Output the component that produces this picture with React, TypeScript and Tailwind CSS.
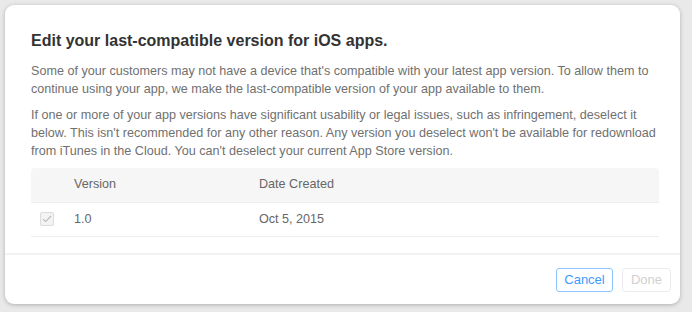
export default function App() {
  return (
    <div className="h-[312px] w-[692px] overflow-hidden bg-[#e9e9e9] pl-[5px] pt-[5px] font-['Liberation_Sans',Arial,sans-serif]">
      <div className="flex h-[299px] w-[675px] flex-col rounded-[9px] bg-white shadow-[0_1px_4px_rgba(0,0,0,0.25)]">
        <div className="px-[26px] pt-[26px]">
          <h1 className="text-[16px] font-bold leading-[20px] text-[#333]">
            Edit your last-compatible version for iOS apps.
          </h1>
          <p className="mt-[11px] whitespace-nowrap text-[12.6px] leading-[18px] text-[#707070]">
            Some of your customers may not have a device that's compatible with your latest app version. To allow them to
            <br />
            continue using your app, we make the last-compatible version of your app available to them.
          </p>
          <p className="mt-[8px] whitespace-nowrap text-[12.6px] leading-[18px] text-[#707070]">
            If one or more of your app versions have significant usability or legal issues, such as infringement, deselect it
            <br />
            below. This isn't recommended for any other reason. Any version you deselect won't be available for redownload
            <br />
            from iTunes in the Cloud. You can't deselect your current App Store version.
          </p>
          <table className="mt-[8px] w-[628px] border-collapse text-[12.6px] text-[#666]">
            <thead>
              <tr className="h-[34px] bg-[#f6f6f6]">
                <th className="w-[43px] rounded-tl-[4px] p-0"></th>
                <th className="w-[185px] p-0 text-left font-normal">Version</th>
                <th className="rounded-tr-[4px] p-0 text-left font-normal">Date Created</th>
              </tr>
            </thead>
            <tbody>
              <tr className="h-[34px] border-y border-[#eeeeee]">
                <td className="p-0 pl-[9px]">
                  <span className="flex h-[14px] w-[14px] items-center justify-center rounded-[2px] border border-[#dcdcdc] bg-[#f3f3f3]">
                    <svg width="10" height="8" viewBox="0 0 10 8" fill="none">
                      <path d="M1 4.2 3.6 6.6 9 1" stroke="#b8b8b8" strokeWidth="1.1" />
                    </svg>
                  </span>
                </td>
                <td className="p-0">1.0</td>
                <td className="p-0">Oct 5, 2015</td>
              </tr>
            </tbody>
          </table>
        </div>
        <div className="mt-auto flex justify-end gap-[9px] border-t-2 border-[#f2f2f2] px-[9px] pb-[12px] pt-[13px]">
          <button className="h-[24px] w-[57px] rounded-[3px] border border-[#8cc4ff] text-[13px] text-[#3d9bff]">
            Cancel
          </button>
          <button className="h-[24px] w-[49px] rounded-[3px] border border-[#ececec] text-[13px] text-[#d0d0d0]">
            Done
          </button>
        </div>
      </div>
    </div>
  );
}
